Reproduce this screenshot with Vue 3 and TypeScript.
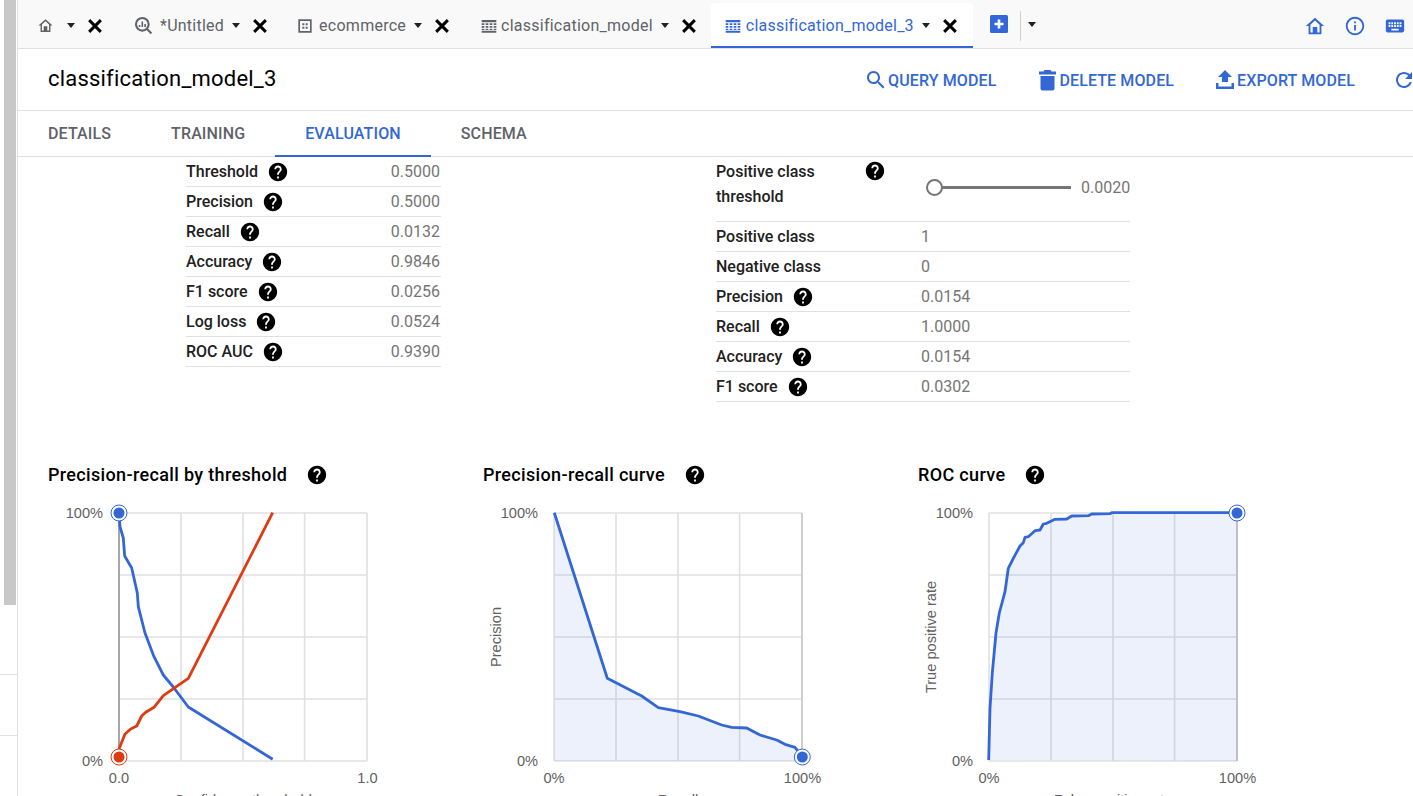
<script setup lang="ts">
type Tab = { icon: string; label: string; active?: boolean };
type Row = { label: string; value: string };
type Pt = [number, number];
type Series = { color: string; pts: Pt[]; marker?: Pt };
type Chart = {
  title: string;
  left: number;
  xStart: string;
  xEnd: string;
  yTitle: string;
  xTitle: string;
  cursor: number;
  cursorColor: string;
  cursorWidth: number;
  fill: boolean;
  series: Series[];
};

const tabs: Tab[] = [
  { icon: "home", label: "" },
  { icon: "query", label: "*Untitled" },
  { icon: "dataset", label: "ecommerce" },
  { icon: "table", label: "classification_model" },
  { icon: "table", label: "classification_model_3", active: true },
];

const paths = {
  close: "M5 5 19 19M19 5 5 19",
  homeOutline: "M12 3 2 12h3v9h14v-9h3zM12 6l5 4.5V19H7v-8.5z",
  homeDoor: "M9.5 13h5v7h-5z",
  info: "M11 7h2v2h-2zm0 4h2v6h-2zm1-9C6.48 2 2 6.48 2 12s4.48 10 10 10 10-4.48 10-10S17.52 2 12 2zm0 18c-4.41 0-8-3.59-8-8s3.59-8 8-8 8 3.59 8 8-3.59 8-8 8z",
  keyboard: "M20 5H4c-1.1 0-1.99.9-1.99 2L2 17c0 1.1.9 2 2 2h16c1.1 0 2-.9 2-2V7c0-1.1-.9-2-2-2zm-9 3h2v2h-2V8zm0 3h2v2h-2v-2zM8 8h2v2H8V8zm0 3h2v2H8v-2zm-1 2H5v-2h2v2zm0-3H5V8h2v2zm9 7H8v-2h8v2zm0-4h-2v-2h2v2zm0-3h-2V8h2v2zm3 3h-2v-2h2v2zm0-3h-2V8h2v2z",
  search: "M15.5 14h-.79l-.28-.27C15.41 12.59 16 11.11 16 9.5 16 5.91 13.09 3 9.5 3S3 5.91 3 9.5 5.91 16 9.5 16c1.61 0 3.09-.59 4.23-1.57l.27.28v.79l5 4.99L20.49 19l-4.99-5zm-6 0C7.01 14 5 11.99 5 9.5S7.01 5 9.5 5 14 7.01 14 9.5 11.99 14 9.5 14z",
  trash: "M5.5 8h14v12.5c0 1.1-.9 2-2 2h-10c-1.1 0-2-.9-2-2zM4 3.5h4.5l1-1.5h6l1 1.5H21V6.5H4z",
  upload: "M9 14h6V9h4l-7-7-7 7h4zM3 15h2.5v3.5h13V15H21v6H3z",
  refresh: "M17.65 6.35C16.2 4.9 14.21 4 12 4c-4.42 0-7.99 3.58-7.99 8s3.57 8 7.99 8c3.73 0 6.84-2.55 7.73-6h-2.08c-.82 2.33-3.04 4-5.65 4-3.31 0-6-2.69-6-6s2.69-6 6-6c1.66 0 3.14.69 4.22 1.78L13 11h7V4l-2.35 2.35z",
  help: "M12 2C6.48 2 2 6.48 2 12s4.48 10 10 10 10-4.48 10-10S17.52 2 12 2zm1 17h-2v-2h2v2zm2.07-7.75l-.9.92C13.45 12.9 13 13.5 13 15h-2v-.5c0-1.1.45-2.1 1.17-2.83l1.24-1.26c.37-.36.59-.86.59-1.41 0-1.1-.9-2-2-2s-2 .9-2 2H8c0-2.21 1.79-4 4-4s4 1.79 4 4c0 .88-.36 1.68-.93 2.25z",
};

const actions = [
  { label: "QUERY MODEL", icon: paths.search },
  { label: "DELETE MODEL", icon: paths.trash },
  { label: "EXPORT MODEL", icon: paths.upload },
];

const detailTabs = ["DETAILS", "TRAINING", "EVALUATION", "SCHEMA"];

const leftRows: Row[] = [
  { label: "Threshold", value: "0.5000" },
  { label: "Precision", value: "0.5000" },
  { label: "Recall", value: "0.0132" },
  { label: "Accuracy", value: "0.9846" },
  { label: "F1 score", value: "0.0256" },
  { label: "Log loss", value: "0.0524" },
  { label: "ROC AUC", value: "0.9390" },
];

const plainRows: Row[] = [
  { label: "Positive class", value: "1" },
  { label: "Negative class", value: "0" },
];

const rightRows: Row[] = [
  { label: "Precision", value: "0.0154" },
  { label: "Recall", value: "1.0000" },
  { label: "Accuracy", value: "0.0154" },
  { label: "F1 score", value: "0.0302" },
];

const BLUE = "#3367d6";
const RED = "#dd3b12";
const TOP = 493;

const charts: Chart[] = [
  {
    title: "Precision-recall by threshold",
    left: 48,
    xStart: "0.0",
    xEnd: "1.0",
    yTitle: "",
    xTitle: "Confidence threshold",
    cursor: 71,
    cursorColor: "#a6a6a6",
    cursorWidth: 2,
    fill: false,
    series: [
      {
        color: BLUE,
        marker: [119, 513],
        pts: [[119, 512.7], [120, 526.7], [123.3, 538], [124.7, 556], [131.7, 568], [137.3, 593], [138.3, 606.7], [145, 633], [154, 656.7], [163.3, 675], [173.3, 687], [188.3, 707], [272.7, 759.3]],
      },
      {
        color: RED,
        marker: [119, 757],
        pts: [[119, 749], [125, 734], [130.7, 729], [136.7, 726], [141.7, 716], [145.7, 712.3], [154, 707.3], [163.3, 695.7], [188.3, 678.3], [272.7, 512.7]],
      },
    ],
  },
  {
    title: "Precision-recall curve",
    left: 483,
    xStart: "0%",
    xEnd: "100%",
    yTitle: "Precision",
    xTitle: "Recall",
    cursor: 319,
    cursorColor: "#c4c7cc",
    cursorWidth: 1.5,
    fill: true,
    series: [
      {
        color: BLUE,
        marker: [802.3, 757],
        pts: [[554.3, 512.7], [607.3, 678.3], [641.7, 696], [658.3, 707.7], [680, 711.7], [698.3, 716], [721.7, 725], [731.7, 727.3], [746.7, 728], [760, 735], [776.7, 740], [785, 744.3], [795, 747.3], [802.3, 756.7]],
      },
    ],
  },
  {
    title: "ROC curve",
    left: 918,
    xStart: "0%",
    xEnd: "100%",
    yTitle: "True positive rate",
    xTitle: "False positive rate",
    cursor: 319,
    cursorColor: "#b4b7bd",
    cursorWidth: 1.5,
    fill: true,
    series: [
      {
        color: BLUE,
        marker: [1237, 513],
        pts: [[988.7, 760], [990, 708.3], [992.3, 673], [996, 633], [999.3, 613], [1005, 591.7], [1008.3, 568.3], [1013.3, 558.3], [1020, 546], [1023.3, 542.7], [1025, 537.3], [1028.3, 536.7], [1035, 530.7], [1040, 530], [1043.3, 524], [1046.7, 523.3], [1055, 519.3], [1066.7, 519], [1071.7, 516], [1088.3, 515.7], [1091.7, 514], [1110, 513.7], [1111.7, 512.7], [1237.3, 512.7]],
      },
    ],
  },
];

const gridX = [71, 133, 195, 256.6, 319];
const gridY = [20, 82, 144, 206, 268];

function line(c: Chart, pts: Pt[]): string {
  return pts.map(([x, y]) => `${(x - c.left).toFixed(1)},${(y - TOP).toFixed(1)}`).join(" ");
}

function area(c: Chart, pts: Pt[]): string {
  const first = pts[0];
  const last = pts[pts.length - 1];
  const closing: Pt[] = first[1] < last[1]
    ? [[last[0], 761], [first[0], 761]]
    : [[last[0], 761]];
  return line(c, [...pts, ...closing]);
}
</script>

<template>
  <div class="page">
    <aside class="rail">
      <div class="thumb"></div>
      <div class="rail-line first"></div>
      <div class="rail-line second"></div>
    </aside>

    <main class="main">
      <header class="tabbar">
        <div v-for="tab in tabs" :key="tab.label" class="tab" :class="{ active: tab.active, first: tab.icon === 'home' }">
          <svg class="tab-icon" :class="tab.icon" viewBox="0 0 24 24" aria-hidden="true">
            <g v-if="tab.icon === 'home'" fill="currentColor">
              <path :d="paths.homeOutline" fill-rule="evenodd" />
              <path :d="paths.homeDoor" />
            </g>
            <g v-else-if="tab.icon === 'query'" fill="none" stroke="currentColor">
              <circle cx="10.5" cy="10.5" r="8" stroke-width="2.6" />
              <path d="M16.5 16.5 22 22" stroke-width="2.6" />
              <path d="M7 14v-2.5M10.5 14V7M14 14v-4" stroke-width="2" />
            </g>
            <g v-else-if="tab.icon === 'dataset'" fill="currentColor">
              <path d="M2 2h20v20H2zM4.5 4.5v15h15v-15z" fill-rule="evenodd" />
              <path d="M8 8h3v3H8zM13 8h3v3h-3zM8 13h3v3H8zM13 13h3v3h-3z" />
            </g>
            <g v-else fill="currentColor">
              <path d="M1 3h22v3.5H1zM1 19h22v3H1z" />
              <path d="M1 8h4v2.5H1zM7 8h4v2.5H7zM13 8h4v2.5h-4zM19 8h4v2.5h-4zM1 12h4v2.5H1zM7 12h4v2.5H7zM13 12h4v2.5h-4zM19 12h4v2.5h-4zM1 16h4v2H1zM7 16h4v2H7zM13 16h4v2h-4zM19 16h4v2h-4z" />
            </g>
          </svg>
          <span v-if="tab.label" class="tab-label">{{ tab.label }}</span>
          <span class="caret"></span>
          <svg class="close" viewBox="0 0 24 24" aria-hidden="true">
            <path :d="paths.close" stroke="currentColor" stroke-width="3.6" fill="none" />
          </svg>
        </div>
        <div class="add">
          <svg viewBox="0 0 18 18" aria-hidden="true">
            <rect width="18" height="18" rx="1.5" fill="#3367d6" />
            <path d="M9 4.5v9M4.5 9h9" stroke="#fff" stroke-width="2.6" />
          </svg>
        </div>
        <div class="divider"></div>
        <span class="caret more"></span>
        <div class="global-icons">
          <svg viewBox="0 0 24 24" aria-hidden="true">
            <path :d="paths.homeOutline" fill="currentColor" fill-rule="evenodd" />
            <path :d="paths.homeDoor" fill="currentColor" />
          </svg>
          <svg viewBox="0 0 24 24" aria-hidden="true"><path :d="paths.info" fill="currentColor" /></svg>
          <svg viewBox="0 0 24 24" aria-hidden="true"><path :d="paths.keyboard" fill="currentColor" /></svg>
        </div>
      </header>

      <section class="title-row">
        <h1 class="title">classification_model_3</h1>
        <div class="actions">
          <div v-for="a in actions" :key="a.label" class="action">
            <svg viewBox="1 1 22 22" aria-hidden="true"><path :d="a.icon" fill="currentColor" /></svg>
            <span>{{ a.label }}</span>
          </div>
          <svg class="refresh" viewBox="0 0 24 24" aria-hidden="true"><path :d="paths.refresh" fill="currentColor" /></svg>
        </div>
      </section>

      <nav class="detail-tabs">
        <div v-for="t in detailTabs" :key="t" class="detail-tab" :class="{ current: t === 'EVALUATION' }">{{ t }}</div>
      </nav>

      <section class="metrics">
        <div class="table left-table">
          <div v-for="r in leftRows" :key="r.label" class="row">
            <span class="label">{{ r.label }}</span>
            <svg class="help" viewBox="0 0 24 24" aria-hidden="true"><path :d="paths.help" /></svg>
            <span class="value end">{{ r.value }}</span>
          </div>
        </div>

        <div class="table right-table">
          <div class="row slider-row">
            <div class="label-cell">
              <span class="label wrap">Positive class threshold</span>
              <svg class="help top" viewBox="0 0 24 24" aria-hidden="true"><path :d="paths.help" /></svg>
            </div>
            <div class="slider">
              <div class="track"><span class="knob"></span></div>
              <span class="value">0.0020</span>
            </div>
          </div>
          <div v-for="r in plainRows" :key="r.label" class="row">
            <div class="label-cell"><span class="label">{{ r.label }}</span></div>
            <span class="value">{{ r.value }}</span>
          </div>
          <div v-for="r in rightRows" :key="r.label + 'r'" class="row">
            <div class="label-cell">
              <span class="label">{{ r.label }}</span>
              <svg class="help" viewBox="0 0 24 24" aria-hidden="true"><path :d="paths.help" /></svg>
            </div>
            <span class="value">{{ r.value }}</span>
          </div>
        </div>
      </section>

      <section class="charts">
        <article v-for="c in charts" :key="c.title" class="chart">
          <div class="chart-title">
            <h2>{{ c.title }}</h2>
            <svg class="help big" viewBox="0 0 24 24" aria-hidden="true"><path :d="paths.help" /></svg>
          </div>
          <svg class="plot" width="435" height="320" viewBox="0 0 435 320">
            <line v-for="x in gridX" :key="'x' + x" :x1="x" :x2="x" y1="20" y2="268" class="grid" />
            <line v-for="y in gridY" :key="'y' + y" x1="71" x2="319" :y1="y" :y2="y" class="grid" />
            <polygon v-if="c.fill" :points="area(c, c.series[0].pts)" fill="#3367d6" fill-opacity="0.09" />
            <line :x1="c.cursor" :x2="c.cursor" y1="20" y2="268" :stroke="c.cursorColor" :stroke-width="c.cursorWidth" />
            <text x="55" y="25" text-anchor="end" class="axis">100%</text>
            <text x="55" y="273" text-anchor="end" class="axis">0%</text>
            <text x="71" y="290" text-anchor="middle" class="axis">{{ c.xStart }}</text>
            <text x="319.5" y="290" text-anchor="middle" class="axis">{{ c.xEnd }}</text>
            <text x="195" y="312" text-anchor="middle" class="axis">{{ c.xTitle }}</text>
            <text v-if="c.yTitle" transform="translate(18 144) rotate(-90)" text-anchor="middle" class="axis">{{ c.yTitle }}</text>
            <g v-for="s in c.series" :key="s.color">
              <polyline :points="line(c, s.pts)" fill="none" :stroke="s.color" stroke-width="2.8" stroke-linejoin="round" />
              <template v-if="s.marker">
                <circle :cx="s.marker[0] - c.left" :cy="s.marker[1] - TOP" r="8" fill="#fff" :stroke="s.color" stroke-width="1" />
                <circle :cx="s.marker[0] - c.left" :cy="s.marker[1] - TOP" r="5.5" :fill="s.color" />
              </template>
            </g>
          </svg>
        </article>
      </section>
    </main>
  </div>
</template>

<style>
html, body { margin: 0; padding: 0; overflow: hidden; background: #fff; }
</style>

<style scoped>
.page {
  display: flex;
  width: 1413px;
  height: 796px;
  overflow: hidden;
  background: #fff;
  font-family: Roboto, "Liberation Sans", sans-serif;
}
.rail {
  flex: 0 0 18px;
  box-sizing: border-box;
  border-right: 1px solid #e0e0e0;
}
.thumb { width: 12px; height: 605px; margin-left: 4px; background: #c8c8c8; }
.rail-line { height: 1px; background: #e0e0e0; }
.rail-line.first { margin-top: 69px; }
.rail-line.second { margin-top: 60px; }

.main { flex: 1; min-width: 0; overflow: hidden; }

.tabbar {
  display: flex;
  align-items: stretch;
  box-sizing: border-box;
  height: 49px;
  background: #f9f9f9;
  border-bottom: 1px solid #e0e0e0;
  color: #5f6368;
}
.tab {
  display: flex;
  align-items: center;
  box-sizing: border-box;
  height: 48px;
  padding: 3px 15px 0 14px;
  font-size: 16px;
  letter-spacing: 0.25px;
}
.tab.first { padding: 3px 17px 0 19px; }
.tab.active {
  background: #fff;
  color: #3367d6;
  border-bottom: 2px solid #3367d6;
  border-radius: 4px 4px 0 0;
  margin: 3px 0 0 -1px;
  height: 45px;
  padding-top: 2px;
  letter-spacing: 0.23px;
}
.tab-icon { width: 16px; height: 16px; flex: none; }
.tab-icon.query { width: 19px; height: 19px; }
.tab-icon.home { width: 17px; height: 17px; margin-right: 5px; }
.tab-label { margin-left: 5px; white-space: nowrap; }
.tab-icon.query + .tab-label { margin-left: 7px; }
.tab-icon.dataset + .tab-label { margin-left: 6px; }
.tab:not(.active) .tab-icon.table { margin-left: 2px; }
.tab:not(.active) .tab-icon.table + .tab-label { margin-left: 4px; }
.caret {
  flex: none;
  width: 0;
  height: 0;
  margin-left: 8px;
  border-left: 4.5px solid transparent;
  border-right: 4.5px solid transparent;
  border-top: 5px solid #202124;
}
.close { flex: none; width: 20px; height: 20px; margin-left: 10px; margin-right: -2px; color: #000; }
.add { display: flex; align-items: center; margin-left: 17px; }
.add svg { width: 18px; height: 18px; }
.divider { width: 1px; height: 30px; margin: 11px 0 0 12px; background: #d0d0d0; }
.caret.more { align-self: center; margin-left: 7px; }
.global-icons {
  display: flex;
  align-items: center;
  gap: 18px;
  margin-left: auto;
  padding: 3px 7px 0 0;
  color: #3367d6;
}
.global-icons svg { width: 22px; height: 22px; flex: none; }

.title-row {
  display: flex;
  align-items: center;
  box-sizing: border-box;
  height: 62px;
  border-bottom: 1px solid #e0e0e0;
  padding-left: 30px;
}
.title {
  margin: 0 0 2px;
  width: 228px;
  font-size: 22px;
  font-weight: 400;
  letter-spacing: 0.2px;
  color: #000;
  white-space: nowrap;
}
.actions {
  display: flex;
  align-items: center;
  flex: none;
  margin-left: 591px;
  padding-top: 1px;
  color: #3367d6;
  font-size: 16px;
  font-weight: 500;
  letter-spacing: 0.12px;
}
.action { display: flex; align-items: center; gap: 1px; margin-right: 42px; white-space: nowrap; }
.action svg { width: 22px; height: 22px; flex: none; margin-left: -2px; }
.refresh { width: 24px; height: 24px; flex: none; margin-left: -5px; }

.detail-tabs {
  display: flex;
  box-sizing: border-box;
  height: 46px;
  border-bottom: 1px solid #e0e0e0;
}
.detail-tab {
  box-sizing: border-box;
  height: 46px;
  padding: 13px 30px 0;
  font-size: 16px;
  font-weight: 500;
  letter-spacing: 0.13px;
  color: #5f6368;
  white-space: nowrap;
}
.detail-tab.current { color: #3367d6; border-bottom: 2px solid #3367d6; }

.metrics { display: flex; align-items: flex-start; padding: 0 0 61px 168px; }
.table { flex: none; }
.left-table { width: 255px; }
.right-table { width: 414px; margin-left: 275px; }
.row {
  display: flex;
  align-items: center;
  box-sizing: border-box;
  height: 30px;
  border-bottom: 1px solid #e0e0e0;
}
.label { font-size: 16px; font-weight: 500; color: #212121; white-space: nowrap; }
.value { font-size: 16px; color: #757575; }
.value.end { margin-left: auto; padding-right: 1px; }
.help { width: 22px; height: 22px; margin-left: 9px; flex: none; fill: #000; }
.help.top { margin: 3px 0 0 -2px; align-self: flex-start; }
.label-cell { display: flex; align-items: center; flex: 0 0 205px; }
.slider-row { height: 65px; align-items: flex-start; }
.slider-row .label-cell { align-items: flex-start; }
.label.wrap { display: block; width: 150px; white-space: normal; line-height: 25px; margin-top: 2px; }
.slider { display: flex; align-items: center; flex: 1; padding: 21px 0 0 14px; }
.track { position: relative; width: 136px; height: 3px; background: #757575; }
.knob {
  position: absolute;
  left: -9px;
  top: -7px;
  box-sizing: border-box;
  width: 17px;
  height: 17px;
  border: 2px solid #757575;
  border-radius: 50%;
  background: #fff;
}
.slider .value { margin-left: 10px; }

.charts { display: flex; padding-left: 30px; }
.chart { flex: 0 0 435px; }
.chart-title { display: flex; align-items: center; height: 24px; margin-bottom: 6px; }
.chart-title h2 {
  margin: 0 0 1px;
  font-size: 18px;
  font-weight: 500;
  letter-spacing: 0.34px;
  color: #000;
  white-space: nowrap;
}
.help.big { margin-left: 19px; }
.plot { display: block; }
.grid { stroke: #e0e0e0; stroke-width: 1.6; }
.axis { font-family: "Liberation Sans", Arial, sans-serif; font-size: 14.6px; fill: #616161; }
</style>
